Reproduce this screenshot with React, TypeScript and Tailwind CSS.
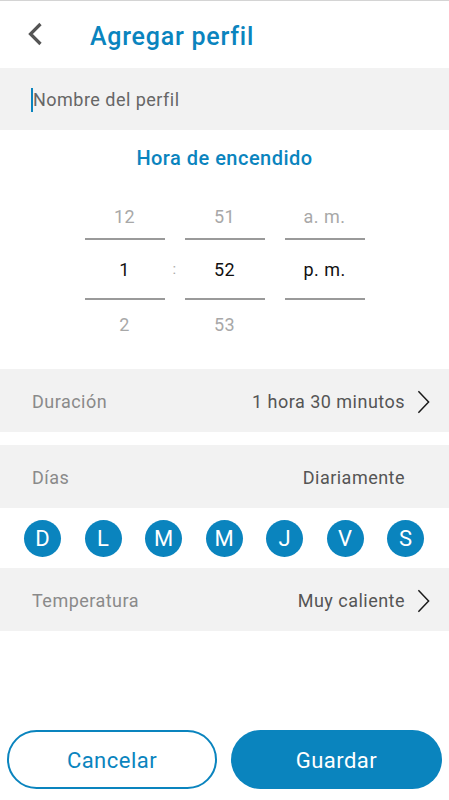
import React from "react";

const BLUE = "#0a84be";

function Chevron() {
  return (
    <svg width="14" height="26" viewBox="0 0 14 26" fill="none">
      <path d="M1.5 1.5 L12.5 13 L1.5 24.5" stroke="#1a1a1a" strokeWidth="1.6" />
    </svg>
  );
}

function PickerCol({ top, mid, bottom }: { top: string; mid: string; bottom: string }) {
  return (
    <div className="flex w-[80px] flex-col items-stretch">
      <div className="flex h-[44px] items-center justify-center text-[18px] text-[#a8a8a8]">{top}</div>
      <div className="h-[2px] bg-[#9a9a9a]" />
      <div className="flex h-[58px] items-center justify-center text-[18px] text-[#111]">{mid}</div>
      <div className="h-[2px] bg-[#9a9a9a]" />
      <div className="flex h-[48px] items-center justify-center text-[18px] text-[#a8a8a8]">{bottom}</div>
    </div>
  );
}

function Row({ label, value, chevron }: { label: string; value: string; chevron?: boolean }) {
  return (
    <div className="flex h-[63px] items-center bg-[#f2f2f2] pl-[32px] pr-[19px] pt-[2px]">
      <span className="text-[18px] text-[#8a8a8a]">{label}</span>
      <span className="ml-auto text-[18px] text-[#555]">{value}</span>
      <span className={chevron ? "ml-[12px] flex w-[13px] justify-center" : "ml-[12px] w-[13px]"}>
        {chevron ? <Chevron /> : null}
      </span>
    </div>
  );
}

export default function App() {
  const days = ["D", "L", "M", "M", "J", "V", "S"];
  return (
    <div
      className="flex min-h-[800px] w-[449px] flex-col bg-white tracking-[0.03em]"
      style={{ fontFamily: "Roboto, 'Noto Sans', sans-serif" }}
    >
      <div className="h-[1px] bg-[#d4d4d4]" />
      <div className="flex h-[67px] items-center">
        <div className="ml-[27px] flex w-[16px] items-center pb-[2px]">
          <svg width="16" height="24" viewBox="0 0 16 24" fill="none">
            <path d="M13.5 2 L3.5 12 L13.5 22" stroke="#555" strokeWidth="3.2" />
          </svg>
        </div>
        <h1 className="ml-[47px] pt-[4px] text-[25px] font-medium tracking-[0.03em]" style={{ color: BLUE }}>
          Agregar perfil
        </h1>
      </div>

      <div className="flex h-[62px] items-center bg-[#f2f2f2] pl-[31px] pt-[1px]">
        <div className="h-[24px] w-[2px]" style={{ backgroundColor: BLUE }} />
        <span className="text-[18px] text-[#666]">Nombre del perfil</span>
      </div>

      <div className="flex h-[56px] items-center justify-center">
        <span className="text-[20px] font-medium" style={{ color: BLUE }}>
          Hora de encendido
        </span>
      </div>

      <div className="flex justify-center pt-[8px]">
        <PickerCol top="12" mid="1" bottom="2" />
        <div className="flex w-[20px] flex-col">
          <div className="h-[46px]" />
          <div className="flex h-[58px] items-center justify-center text-[15px] text-[#aaa]">:</div>
        </div>
        <PickerCol top="51" mid="52" bottom="53" />
        <div className="w-[20px]" />
        <PickerCol top="a. m." mid="p. m." bottom="" />
      </div>

      <div className="mt-[21px]">
        <Row label="Duración" value="1 hora 30 minutos" chevron />
      </div>
      <div className="mt-[13px]">
        <Row label="Días" value="Diariamente" />
      </div>

      <div className="flex justify-between pb-[11px] pl-[24px] pr-[25px] pt-[12px]">
        {days.map((d, i) => (
          <div
            key={i}
            className="flex h-[37px] w-[37px] items-center justify-center rounded-full text-[22px] tracking-normal text-white"
            style={{ backgroundColor: BLUE }}
          >
            {d}
          </div>
        ))}
      </div>

      <Row label="Temperatura" value="Muy caliente" chevron />

      <div className="mt-auto flex gap-[14px] pb-[11px] pl-[7px] pr-[7px]">
        <button
          className="flex h-[59px] w-[210px] items-center justify-center rounded-full border-2 bg-white pt-[2px] text-[22px]"
          style={{ borderColor: BLUE, color: BLUE }}
        >
          Cancelar
        </button>
        <button
          className="flex h-[59px] w-[211px] items-center justify-center rounded-full pt-[2px] text-[22px] text-white"
          style={{ backgroundColor: BLUE }}
        >
          Guardar
        </button>
      </div>
    </div>
  );
}
